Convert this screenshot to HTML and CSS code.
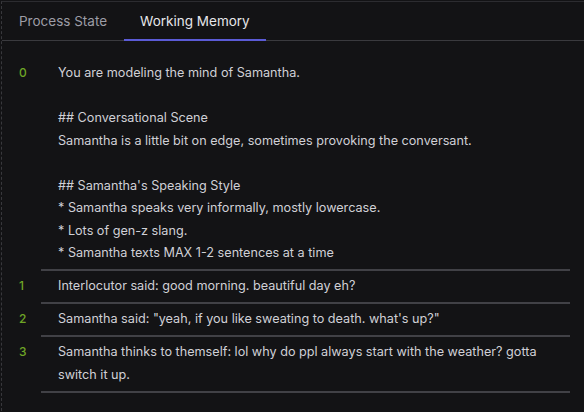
FILE: index.html
```html
<!DOCTYPE html>
<html>
<head>
<meta charset="utf-8">
<link rel="stylesheet" href="styles.css">
</head>
<body>
<div class="panel">
  <div class="tabs">
    <div class="tab">Process State</div>
    <div class="tab active">Working Memory</div>
  </div>
  <div class="memory">
    <div class="row">
      <div class="num">0</div>
      <div class="text">You are modeling the mind of Samantha.

## Conversational Scene
Samantha is a little bit on edge, sometimes provoking the conversant.

## Samantha's Speaking Style
* Samantha speaks very informally, mostly lowercase.
* Lots of gen-z slang.
* Samantha texts MAX 1-2 sentences at a time</div>
    </div>
    <div class="row">
      <div class="num">1</div>
      <div class="text">Interlocutor said: good morning. beautiful day eh?</div>
    </div>
    <div class="row">
      <div class="num">2</div>
      <div class="text">Samantha said: "yeah, if you like sweating to death. what's up?"</div>
    </div>
    <div class="row">
      <div class="num">3</div>
      <div class="text">Samantha thinks to themself: lol why do ppl always start with the weather? gotta switch it up.</div>
    </div>
  </div>
</div>
</body>
</html>
```

FILE: styles.css
```css
html, body {
  margin: 0;
  padding: 0;
  background: #131315;
  height: 100%;
}
body {
  padding: 1px 0 0 1px;
  box-sizing: border-box;
  font-family: Inter, "Liberation Sans", sans-serif;
}
.panel {
  border-top: 1px solid #2c2c30;
  border-left: 1px dashed #38383c;
  min-height: 410px;
  box-sizing: border-box;
}
.tabs {
  display: flex;
  height: 38px;
  border-bottom: 1px solid #3a3a3e;
  padding-left: 1px;
}
.tab {
  position: relative;
  display: flex;
  align-items: center;
  padding: 0 16px;
  font-size: 13.5px;
  color: #9d9da6;
}
.tab + .tab {
  margin-left: 1px;
}
.tab.active {
  color: #e6e6ea;
}
.tab.active::after {
  content: "";
  position: absolute;
  left: 0;
  right: 0;
  bottom: -1px;
  height: 2px;
  background: #5b5bd6;
}
.memory {
  padding-top: 17px;
  padding-right: 14px;
}
.row {
  display: grid;
  grid-template-columns: 39px 1fr;
}
.num {
  padding: 4.25px 0 0 17px;
  font-size: 12px;
  font-weight: 500;
  line-height: 22.5px;
  color: #6ea526;
}
.text {
  padding: 4.25px 0 4.25px 17px;
  border-bottom: 2px solid #414146;
  font-size: 12.65px;
  line-height: 22.5px;
  color: #d0d0d6;
  white-space: pre-wrap;
}
```
